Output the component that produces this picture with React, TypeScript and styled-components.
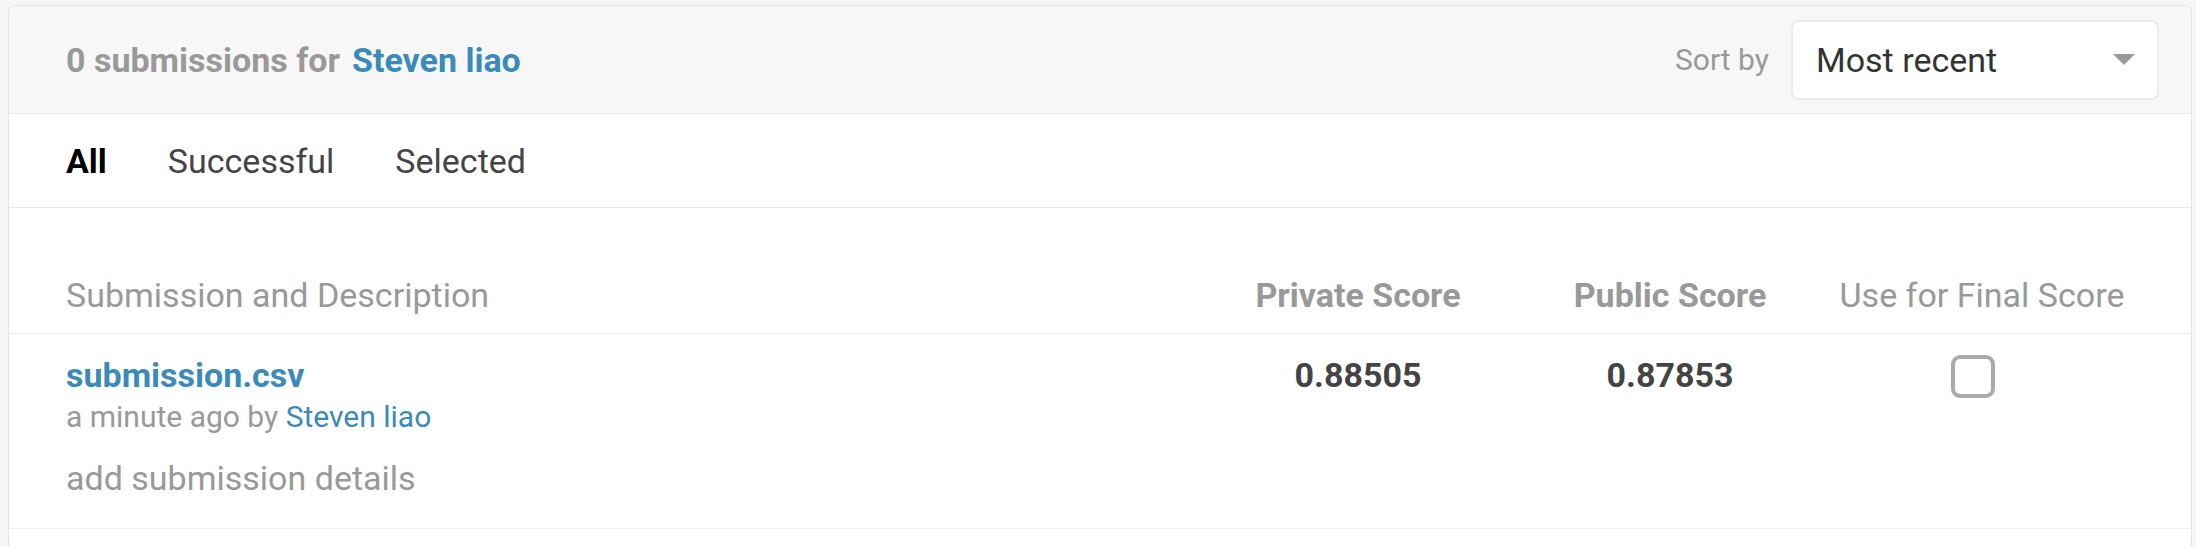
import React from "react";
import styled, { createGlobalStyle } from "styled-components";

const Global = createGlobalStyle`
  html, body { margin: 0; padding: 0; background: #f5f6f7; }
  body { font-family: Roboto, "Liberation Sans", Arial, sans-serif; overflow: hidden; }
  * { box-sizing: border-box; }
`;

const Card = styled.div`
  margin: 5px 4px 0 8px;
  min-height: 600px;
  background: #fff;
  border: 1px solid #e3e4e6;
  border-bottom: none;
  border-radius: 8px 8px 0 0;
  overflow: hidden;
`;

const Header = styled.div`
  height: 108px;
  background: #f7f7f8;
  border-bottom: 1px solid #e8e9ea;
  display: flex;
  align-items: center;
  justify-content: space-between;
  padding: 0 32px 0 57px;
`;

const Title = styled.div`
  font-size: 34px;
  font-weight: 700;
  color: #999;
  display: flex;
  gap: 12px;
`;

const Link = styled.a<{ $bold?: boolean }>`
  color: #3a8aba;
  font-weight: ${(p) => (p.$bold ? 700 : 400)};
  text-decoration: none;
`;

const SortGroup = styled.div`
  display: flex;
  align-items: center;
  gap: 22px;
`;

const SortLabel = styled.span`
  font-size: 30px;
  color: #999;
`;

const Select = styled.div`
  width: 368px;
  height: 80px;
  background: #fff;
  border: 2px solid #ececec;
  border-radius: 8px;
  display: flex;
  align-items: center;
  justify-content: space-between;
  padding: 0 22px 0 23px;
  font-size: 34px;
  color: #333;
`;

const Caret = styled.span`
  width: 0;
  height: 0;
  border-left: 11px solid transparent;
  border-right: 11px solid transparent;
  border-top: 11px solid #999;
`;

const Tabs = styled.div`
  height: 94px;
  border-bottom: 1px solid #e8e9ea;
  display: flex;
  align-items: center;
  gap: 61px;
  padding: 0 0 0 57px;
`;

const Tab = styled.span<{ $active?: boolean }>`
  font-size: 34px;
  color: ${(p) => (p.$active ? "#000" : "#444")};
  font-weight: ${(p) => (p.$active ? 700 : 400)};
`;

const Row = styled.div<{ $head?: boolean }>`
  display: grid;
  grid-template-columns: 1fr repeat(3, 312px);
  padding: 0 53px 0 57px;
  border-bottom: 1px solid #eeeff0;
  height: ${(p) => (p.$head ? "126px" : "195px")};
  align-items: ${(p) => (p.$head ? "end" : "start")};
  padding-bottom: ${(p) => (p.$head ? "18px" : "0")};
  padding-top: ${(p) => (p.$head ? "0" : "21px")};
`;

const HeadCell = styled.div<{ $center?: boolean; $bold?: boolean }>`
  font-size: 34px;
  line-height: 40px;
  color: #999;
  font-weight: ${(p) => (p.$bold ? 700 : 400)};
  text-align: ${(p) => (p.$center ? "center" : "left")};
`;

const Desc = styled.div`
  display: flex;
  flex-direction: column;
`;

const FileName = styled(Link)`
  font-size: 34px;
  line-height: 40px;
`;

const Meta = styled.div`
  font-size: 30px;
  line-height: 44px;
  color: #999;
`;

const Details = styled.div`
  margin-top: 17px;
  font-size: 34px;
  line-height: 44px;
  color: #999;
`;

const Score = styled.div`
  font-size: 34px;
  line-height: 40px;
  font-weight: 700;
  color: #444;
  text-align: center;
`;

const CheckCell = styled.div`
  display: flex;
  justify-content: center;
  padding-right: 18px;
`;

const Checkbox = styled.div`
  width: 44px;
  height: 43px;
  border: 4px solid #aaa;
  border-radius: 9px;
  background: #fff;
`;

export default function App() {
  return (
    <>
      <Global />
      <Card>
        <Header>
          <Title>
            <span>0 submissions for</span>
            <Link $bold>Steven liao</Link>
          </Title>
          <SortGroup>
            <SortLabel>Sort by</SortLabel>
            <Select>
              <span>Most recent</span>
              <Caret />
            </Select>
          </SortGroup>
        </Header>
        <Tabs>
          <Tab $active>All</Tab>
          <Tab>Successful</Tab>
          <Tab>Selected</Tab>
        </Tabs>
        <Row $head>
          <HeadCell>Submission and Description</HeadCell>
          <HeadCell $center $bold>Private Score</HeadCell>
          <HeadCell $center $bold>Public Score</HeadCell>
          <HeadCell $center>Use for Final Score</HeadCell>
        </Row>
        <Row>
          <Desc>
            <FileName $bold>submission.csv</FileName>
            <Meta>
              a minute ago by <Link>Steven liao</Link>
            </Meta>
            <Details>add submission details</Details>
          </Desc>
          <Score>0.88505</Score>
          <Score>0.87853</Score>
          <CheckCell>
            <Checkbox />
          </CheckCell>
        </Row>
      </Card>
    </>
  );
}
